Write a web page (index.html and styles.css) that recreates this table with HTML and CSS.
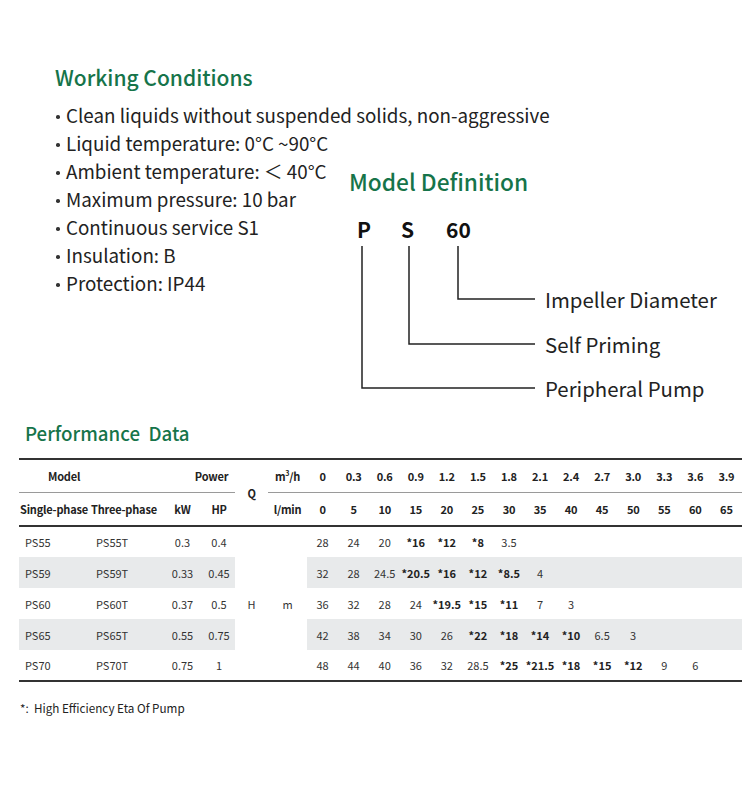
FILE: index.html
```html
<!DOCTYPE html>
<html>
<head>
<meta charset="utf-8">
<link rel="stylesheet" href="styles.css">
</head>
<body>
<div class="page">
  <section class="top">
    <div class="conditions">
      <h2 class="title">Working Conditions</h2>
      <ul class="bullets">
        <li>Clean liquids without suspended solids, non-aggressive</li>
        <li>Liquid temperature: 0°C ~90°C</li>
        <li>Ambient temperature: ＜ 40°C</li>
        <li>Maximum pressure: 10 bar</li>
        <li>Continuous service S1</li>
        <li>Insulation: B</li>
        <li>Protection: IP44</li>
      </ul>
    </div>
    <div class="model">
      <h2 class="title title-lg">Model Definition</h2>
      <div class="diagram">
        <svg class="lines" width="200" height="180" viewBox="0 0 200 180">
          <path d="M13 35 V177 H186" />
          <path d="M60 35 V133 H186" />
          <path d="M109 35 V88 H186" />
        </svg>
        <span class="code code-p">P</span>
        <span class="code code-s">S</span>
        <span class="code code-n">60</span>
        <span class="label label-1">Impeller Diameter</span>
        <span class="label label-2">Self Priming</span>
        <span class="label label-3">Peripheral Pump</span>
      </div>
    </div>
  </section>

  <section class="perf">
    <h2 class="title title-sm">Performance&nbsp; Data</h2>
    <table class="data">
      <colgroup>
        <col class="c-single"><col class="c-three"><col class="c-kw"><col class="c-hp"><col class="c-q"><col class="c-unit">
        <col class="c-v"><col class="c-v"><col class="c-v"><col class="c-v"><col class="c-v"><col class="c-v"><col class="c-v">
        <col class="c-v"><col class="c-v"><col class="c-v"><col class="c-v"><col class="c-v"><col class="c-v"><col class="c-v">
      </colgroup>
      <thead>
        <tr class="h1">
          <th colspan="2" class="model-h mid">Model</th>
          <th colspan="2" class="power-h mid">Power</th>
          <th rowspan="2" class="q">Q</th>
          <th class="mid">m<sup>3</sup>/h</th>
          <th class="mid">0</th><th class="mid">0.3</th><th class="mid">0.6</th><th class="mid">0.9</th><th class="mid">1.2</th><th class="mid">1.5</th><th class="mid">1.8</th>
          <th class="mid">2.1</th><th class="mid">2.4</th><th class="mid">2.7</th><th class="mid">3.0</th><th class="mid">3.3</th><th class="mid">3.6</th><th class="mid">3.9</th>
        </tr>
        <tr class="h2">
          <th class="single-h">Single-phase</th>
          <th class="three-h">Three-phase</th>
          <th>kW</th>
          <th>HP</th>
          <th>l/min</th>
          <th>0</th><th>5</th><th>10</th><th>15</th><th>20</th><th>25</th><th>30</th>
          <th>35</th><th>40</th><th>45</th><th>50</th><th>55</th><th>60</th><th>65</th>
        </tr>
      </thead>
      <tbody>
        <tr>
          <td class="name1">PS55</td><td class="name2">PS55T</td><td>0.3</td><td>0.4</td>
          <td rowspan="5" class="unit">H</td><td rowspan="5" class="unit">m</td>
          <td>28</td><td>24</td><td>20</td><td class="b">*16</td><td class="b">*12</td><td class="b">*8</td><td>3.5</td>
          <td></td><td></td><td></td><td></td><td></td><td></td><td></td>
        </tr>
        <tr class="shade">
          <td class="name1">PS59</td><td class="name2">PS59T</td><td>0.33</td><td>0.45</td>
          <td>32</td><td>28</td><td>24.5</td><td class="b">*20.5</td><td class="b">*16</td><td class="b">*12</td><td class="b">*8.5</td>
          <td>4</td><td></td><td></td><td></td><td></td><td></td><td></td>
        </tr>
        <tr>
          <td class="name1">PS60</td><td class="name2">PS60T</td><td>0.37</td><td>0.5</td>
          <td>36</td><td>32</td><td>28</td><td>24</td><td class="b">*19.5</td><td class="b">*15</td><td class="b">*11</td>
          <td>7</td><td>3</td><td></td><td></td><td></td><td></td><td></td>
        </tr>
        <tr class="shade">
          <td class="name1">PS65</td><td class="name2">PS65T</td><td>0.55</td><td>0.75</td>
          <td>42</td><td>38</td><td>34</td><td>30</td><td>26</td><td class="b">*22</td><td class="b">*18</td>
          <td class="b">*14</td><td class="b">*10</td><td>6.5</td><td>3</td><td></td><td></td><td></td>
        </tr>
        <tr>
          <td class="name1">PS70</td><td class="name2">PS70T</td><td>0.75</td><td>1</td>
          <td>48</td><td>44</td><td>40</td><td>36</td><td>32</td><td>28.5</td><td class="b">*25</td>
          <td class="b">*21.5</td><td class="b">*18</td><td class="b">*15</td><td class="b">*12</td><td>9</td><td>6</td><td></td>
        </tr>
      </tbody>
    </table>
    <p class="note">*:&nbsp; High Efficiency Eta Of Pump</p>
  </section>
</div>
</body>
</html>
```

FILE: styles.css
```css
* { box-sizing: border-box; }
html, body { margin: 0; padding: 0; background: #fff; }
body {
  font-family: "Noto Sans CJK SC", "Noto Sans", sans-serif;
  color: #222;
  width: 750px;
  height: 800px;
  overflow: hidden;
}
.page { padding-top: 62px; }

.title {
  margin: 0;
  font-weight: 500;
  color: #16744a;
  font-size: 21px;
  line-height: 30px;
}
.title-lg { font-size: 22.7px; line-height: 30px; }
.title-sm { font-size: 18.7px; line-height: 26px; }

.top {
  display: grid;
  grid-template-columns: 294px 1fr;
  padding-left: 55px;
}
.conditions { white-space: nowrap; }
.bullets {
  list-style: none;
  margin: 9px 0 0;
  padding: 0;
  font-size: 18.8px;
  line-height: 28px;
  color: #222;
}
.bullets li { position: relative; padding-left: 11px; }
.bullets li::before {
  content: "";
  position: absolute;
  left: 1px;
  top: 14px;
  width: 3.5px;
  height: 3.5px;
  border-radius: 50%;
  background: #333;
}

.model { padding-top: 105px; }
.diagram {
  position: relative;
  width: 390px;
  height: 190px;
  margin-top: 14px;
}
.lines { position: absolute; left: 0; top: 0; }
.lines path { fill: none; stroke: #222; stroke-width: 1.5; }
.code {
  position: absolute;
  top: 4px;
  font-size: 21px;
  font-weight: 700;
  line-height: 28px;
  color: #111;
}
.code-p { left: 8px; }
.code-s { left: 52px; }
.code-n { left: 97px; }
.label {
  position: absolute;
  left: 196px;
  font-size: 20.4px;
  line-height: 28px;
  color: #222;
  white-space: nowrap;
}
.label-1 { top: 74px; }
.label-2 { top: 119px; }
.label-3 { top: 163px; }

.perf { padding: 19px 8px 0 19px; }
.perf .title-sm { margin-left: 6px; }

.data {
  margin-top: 12px;
  border-collapse: collapse;
  table-layout: fixed;
  width: 723px;
  font-size: 11px;
  color: #333;
}
.c-single { width: 68px; }
.c-three { width: 75px; }
.c-kw { width: 41px; }
.c-hp { width: 32px; }
.c-q { width: 33px; }
.c-unit { width: 39px; }
.c-v { width: 31.07px; }

.data th, .data td {
  padding: 0;
  text-align: center;
  white-space: nowrap;
}
.data th { font-weight: 700; color: #222; letter-spacing: -0.2px; }
.data thead tr.h1 th { height: 33px; border-top: 2px solid #333; }
.data thead tr.h2 th { height: 34px; border-bottom: 2px solid #333; }
.data th.mid { border-bottom: 1px solid #9a9a9a; }
.data th.q { border-bottom: 2px solid #333; }
.data th.model-h { text-align: left; padding-left: 29px; }
.data th.power-h { padding-left: 26px; }
.data th.single-h { text-align: left; padding-left: 1px; }
.data th.three-h { text-align: left; padding-left: 4px; }
.data sup { font-size: 7px; vertical-align: 5px; }

.data td { height: 31px; }
.data td.name1 { text-align: left; padding-left: 6px; }
.data td.name2 { text-align: left; padding-left: 9px; }
.data td.b { font-weight: 700; color: #222; }
.data td.unit { background: #fff; }
.data tr.shade td { background: #e8eaeb; }
.data tbody tr:last-child td { border-bottom: 2px solid #333; }
.data td.unit { border-bottom: 2px solid #333; }

.note {
  margin: 17px 0 0 1px;
  font-size: 11.7px;
  line-height: 18px;
  color: #222;
}
```
